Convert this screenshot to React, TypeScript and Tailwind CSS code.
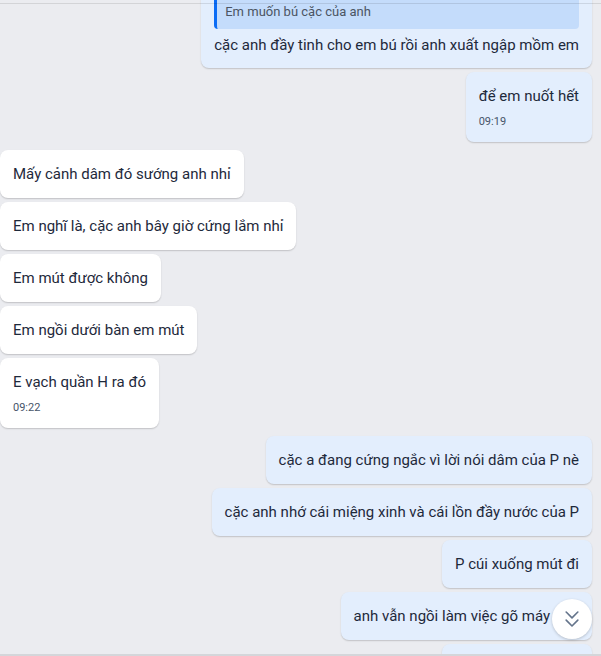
import { ChevronsDown } from 'lucide-react'

type Msg = { text: string; time?: string }

const incoming: Msg[] = [
  { text: 'Mấy cảnh dâm đó sướng anh nhỉ' },
  { text: 'Em nghĩ là, cặc anh bây giờ cứng lắm nhỉ' },
  { text: 'Em mút được không' },
  { text: 'Em ngồi dưới bàn em mút' },
  { text: 'E vạch quần H ra đó', time: '09:22' },
]

const outgoing: Msg[] = [
  { text: 'cặc a đang cứng ngắc vì lời nói dâm của P nè' },
  { text: 'cặc anh nhớ cái miệng xinh và cái lồn đầy nước của P' },
  { text: 'P cúi xuống mút đi' },
  { text: 'anh vẫn ngồi làm việc gõ máy tính' },
  { text: 'P cúi xuống mút đi' },
]

function Bubble({ msg, mine }: { msg: Msg; mine?: boolean }) {
  return (
    <div
      className={
        'rounded-lg px-[13px] py-3 shadow-[0_1px_1.5px_rgba(0,0,0,0.18)] ' +
        (mine ? 'self-end bg-[#e3eefd]' : 'self-start bg-white')
      }
    >
      <p className="text-[15px] leading-6 text-[#1e293b] whitespace-nowrap">{msg.text}</p>
      {msg.time && <p className="mt-[6px] text-[11px] leading-4 text-[#475569]">{msg.time}</p>}
    </div>
  )
}

export default function App() {
  return (
    <div
      className="relative h-[656px] w-[601px] overflow-hidden bg-[#ebecf0]"
      style={{ fontFamily: 'Roboto, "Noto Sans", sans-serif' }}
    >
      <div className="flex flex-col pr-[9px]">
        {/* quoted reply, scrolled partly out of view */}
        <div className="mt-[-20px] self-end rounded-lg bg-[#e3eefd] px-[13px] pt-2 pb-[11px] shadow-[0_1px_1.5px_rgba(0,0,0,0.18)]">
          <div className="flex h-[41px] items-end rounded-[4px] border-l-[3px] border-[#0b6cf5] bg-[#c4dcfb] pl-2 pb-[9px]">
            <span className="text-[13px] leading-4 text-[#4b5563]">Em muốn bú cặc của anh</span>
          </div>
          <p className="mt-1 text-[15px] leading-6 text-[#1e293b] whitespace-nowrap">
            cặc anh đầy tinh cho em bú rồi anh xuất ngập mồm em
          </p>
        </div>

        <div className="mt-1 flex flex-col">
          <Bubble mine msg={{ text: 'để em nuốt hết', time: '09:19' }} />
        </div>

        <div className="mt-2 flex flex-col gap-1">
          {incoming.map((m, i) => (
            <Bubble key={i} msg={m} />
          ))}
        </div>

        <div className="mt-2 flex flex-col gap-1">
          {outgoing.map((m, i) => (
            <Bubble key={i} mine msg={m} />
          ))}
        </div>
      </div>

      <div className="absolute inset-x-0 top-[3px] h-px bg-black/10" />
      <div className="absolute inset-x-0 bottom-0 h-[2px] bg-[#d4d6da]" />

      <button className="absolute left-[552px] top-[599px] flex h-10 w-10 items-center justify-center rounded-full bg-white shadow-[0_1px_3px_rgba(0,0,0,0.2)]">
        <ChevronsDown size={28} strokeWidth={1.4} className="text-[#64748b]" />
      </button>
    </div>
  )
}
